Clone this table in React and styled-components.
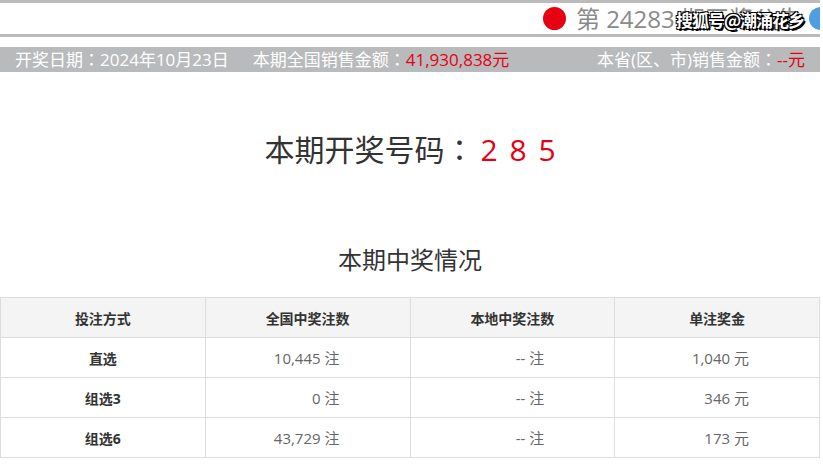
import styled, { createGlobalStyle } from 'styled-components';

const GlobalStyle = createGlobalStyle`
    html, body {
        margin: 0;
        padding: 0;
        background: #fff;
    }
    body {
        font-family: "Open Sans", "Noto Sans CJK SC", sans-serif;
        color: #333;
    }
`;

const Page = styled.div`
    width: 820px;
    overflow: hidden;
`;

const Header = styled.div`
    position: relative;
    height: 31px;
    border-top: 3px solid #bbbbbb;
    border-bottom: 3px solid #bbbbbb;
    display: flex;
    align-items: center;
    justify-content: flex-end;
    overflow: hidden;
`;

const HeaderInner = styled.div`
    display: flex;
    align-items: center;
    margin-right: -12px;
`;

const Dot = styled.span`
    width: 23px;
    height: 23px;
    border-radius: 50%;
    background: ${p => p.$color};
    margin: ${p => p.$margin};
    flex-shrink: 0;
`;

const IssueTitle = styled.span`
    font-size: 24px;
    line-height: 31px;
    color: #8a8a8a;
    white-space: nowrap;
`;

const Watermark = styled.span`
    position: absolute;
    left: 676px;
    top: 4px;
    font-family: "Noto Sans CJK SC", sans-serif;
    font-size: 17px;
    font-weight: 700;
    letter-spacing: -1px;
    color: #fff;
    text-shadow: -1px -1px 0 #000, 1px -1px 0 #000, -1px 1px 0 #000, 1px 1px 0 #000, 2px 2px 0 #000;
    white-space: nowrap;
`;

const InfoBar = styled.div`
    margin-top: 10px;
    height: 25px;
    background: #b9babc;
    color: #fff;
    font-size: 17px;
    line-height: 25px;
    display: flex;
    justify-content: space-between;
    padding: 0 15px;
    white-space: nowrap;
    overflow: hidden;
`;

const InfoGroup = styled.div`
    display: flex;
    gap: 24px;
`;

const Colon = styled.span`
    display: inline-block;
    line-height: 1;
    font-family: "Noto Sans CJK TC", sans-serif;
`;

const Red = styled.span`
    color: #e60012;
`;

const DrawTitle = styled.h1`
    margin: 58px 0 0;
    padding-left: 6px;
    font-weight: 400;
    font-size: 30px;
    line-height: 40px;
    height: 40px;
    text-align: center;
    color: #333;
`;

const Ball = styled.span`
    display: inline-block;
    width: 29px;
    text-align: center;
    color: #e60012;
`;

const SubTitle = styled.h2`
    margin: 74px 0 0;
    font-weight: 400;
    font-size: 24px;
    line-height: 32px;
    text-align: center;
    color: #333;
`;

const Table = styled.table`
    margin-top: 21px;
    width: 820px;
    border-collapse: collapse;
    table-layout: fixed;
`;

const Th = styled.th`
    height: 39px;
    background: #f4f4f4;
    border: 1px solid #dddddd;
    font-size: 14px;
    font-weight: 700;
    color: #333;
    text-align: center;
    padding: 0;
`;

const Td = styled.td`
    height: 39px;
    border: 1px solid #dddddd;
    padding: 0 ${p => (p.$name ? 0 : '70px')} 0 0;
    text-align: ${p => (p.$name ? 'center' : 'right')};
    font-weight: ${p => (p.$name ? 700 : 400)};
    color: ${p => (p.$name ? '#333' : '#666')};
    font-size: ${p => (p.$name ? '14px' : '15px')};
`;

const rows = [
    ['直选', '10,445', '--', '1,040'],
    ['组选3', '0', '--', '346'],
    ['组选6', '43,729', '--', '173'],
];

const App = () => {
    return (
        <Page>
            <GlobalStyle />
            <Header>
                <HeaderInner>
                    <Dot $color="#e60012" $margin="0 10px 0 0" />
                    <IssueTitle>第 24283 期开奖公告</IssueTitle>
                    <Dot $color="#4f9fe0" $margin="0 0 0 8px" />
                </HeaderInner>
                <Watermark>搜狐号@潮涌花乡</Watermark>
            </Header>
            <InfoBar>
                <InfoGroup>
                    <span>开奖日期<Colon>：</Colon>2024年10月23日</span>
                    <span>本期全国销售金额<Colon>：</Colon><Red>41,930,838元</Red></span>
                </InfoGroup>
                <span>本省(区、市)销售金额<Colon>：</Colon><Red>--元</Red></span>
            </InfoBar>
            <DrawTitle>
                本期开奖号码<Colon>：</Colon><Ball>2</Ball><Ball>8</Ball><Ball>5</Ball>
            </DrawTitle>
            <SubTitle>本期中奖情况</SubTitle>
            <Table>
                <thead>
                    <tr>
                        <Th>投注方式</Th>
                        <Th>全国中奖注数</Th>
                        <Th>本地中奖注数</Th>
                        <Th>单注奖金</Th>
                    </tr>
                </thead>
                <tbody>
                    {rows.map(([name, national, local, prize]) => (
                        <tr key={name}>
                            <Td $name>{name}</Td>
                            <Td>{national} 注</Td>
                            <Td>{local} 注</Td>
                            <Td>{prize} 元</Td>
                        </tr>
                    ))}
                </tbody>
            </Table>
        </Page>
    );
};

export default App;
